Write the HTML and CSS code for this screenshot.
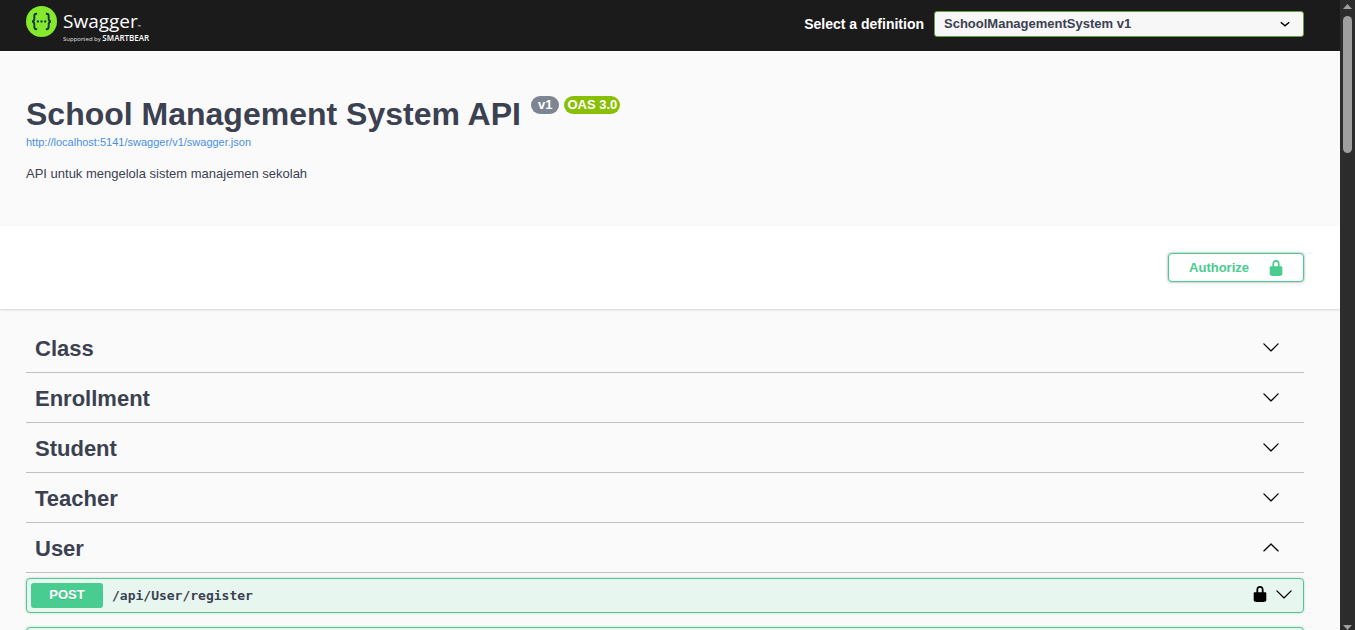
FILE: index.html
```html
<!DOCTYPE html>
<html lang="en">
<head>
<meta charset="utf-8">
<meta name="viewport" content="width=device-width, initial-scale=1">
<title>Swagger UI</title>
<link rel="stylesheet" href="styles.css">
</head>
<body>
<svg class="defs" aria-hidden="true">
  <symbol id="lock" viewBox="0 0 20 20"><path d="M15.8 8H14V5.6C14 2.703 12.665 1 10 1 7.334 1 6 2.703 6 5.6V8H4c-.553 0-1 .646-1 1.199V17c0 .549.428 1.139.951 1.307l1.197.387C5.672 18.861 6.55 19 7.1 19h5.8c.549 0 1.428-.139 1.951-.307l1.196-.387c.524-.167.953-.757.953-1.306V9.199C17 8.646 16.352 8 15.8 8zM12 8H8V5.199C8 3.754 8.797 3 10 3c1.203 0 2 .754 2 2.199V8z"/></symbol>
  <symbol id="down" viewBox="0 0 20 20"><path d="M17.418 6.109c.272-.268.709-.268.979 0s.271.701 0 .969l-7.908 7.83c-.27.268-.707.268-.979 0l-7.908-7.83c-.27-.268-.27-.701 0-.969s.709-.268.979 0L10 13.25z"/></symbol>
  <symbol id="up" viewBox="0 0 20 20"><path d="M17.418 14.908c.272.268.709.268.979 0s.271-.701 0-.969l-7.908-7.83c-.27-.268-.707-.268-.979 0l-7.908 7.83c-.27.268-.27.701 0 .969s.709.268.979 0L10 7.767z"/></symbol>
</svg>
<div class="page">
  <header class="topbar">
    <a class="logo" href="#" aria-label="Swagger, supported by SmartBear">
      <svg class="logo-mark" viewBox="0 0 32 32" aria-hidden="true">
        <circle cx="16" cy="16" r="16" fill="#85ea2d"/>
        <g fill="none" stroke="#173647" stroke-width="2">
          <path d="M11.500 8h-.8c-1.500 0-2.100.8-2.100 2.200v2.600c0 2-.6 3-2.300 3.200 1.700.2 2.300 1.200 2.300 3.200v2.600c0 1.400.6 2.200 2.100 2.200h.8"/>
          <path d="M20.500 8h.8c1.500 0 2.100.8 2.100 2.200v2.600c0 2 .6 3 2.300 3.200-1.700.2-2.300 1.200-2.300 3.200v2.600c0 1.400-.6 2.200-2.100 2.200h-.8"/>
        </g>
        <g fill="#173647"><circle cx="12.200" cy="16" r="1.200"/><circle cx="16" cy="16" r="1.200"/><circle cx="19.800" cy="16" r="1.200"/></g>
      </svg>
      <span class="logo-text">
        <span class="logo-name">Swagger<span class="logo-tm">™</span></span>
        <span class="logo-sub">Supported by <b>SMARTBEAR</b></span>
      </span>
    </a>
    <div class="definition">
      <label for="definition">Select a definition</label>
      <span class="select-box">
        <select id="definition"><option>SchoolManagementSystem v1</option></select>
        <svg class="select-arrow" viewBox="0 0 20 20" aria-hidden="true"><path d="M3 7l7 6 7-6"/></svg>
      </span>
    </div>
  </header>
  <main>
    <section class="info">
      <div class="title-row">
        <h1>School Management System API</h1>
        <span class="badge">v1</span>
        <span class="badge oas">OAS 3.0</span>
      </div>
      <a class="spec-link" href="#">http://localhost:5141/swagger/v1/swagger.json</a>
      <p>API untuk mengelola sistem manajemen sekolah</p>
    </section>
    <section class="auth">
      <button class="authorize" type="button">Authorize<svg class="icon"><use href="#lock"/></svg></button>
    </section>
    <section class="tags">
      <h2><button class="tag" type="button">Class<svg class="icon"><use href="#down"/></svg></button></h2>
      <h2><button class="tag" type="button">Enrollment<svg class="icon"><use href="#down"/></svg></button></h2>
      <h2><button class="tag" type="button">Student<svg class="icon"><use href="#down"/></svg></button></h2>
      <h2><button class="tag" type="button">Teacher<svg class="icon"><use href="#down"/></svg></button></h2>
      <h2><button class="tag" type="button">User<svg class="icon"><use href="#up"/></svg></button></h2>
      <div class="operation">
        <span class="method">POST</span>
        <span class="path">/api/User/register</span>
        <button class="icon-button" type="button" aria-label="Authorization"><svg class="icon"><use href="#lock"/></svg></button>
        <button class="icon-button" type="button" aria-label="Expand"><svg class="icon"><use href="#down"/></svg></button>
      </div>
      <div class="operation"></div>
    </section>
  </main>
</div>
<div class="scrollbar" aria-hidden="true">
  <svg class="scroll-arrow" viewBox="0 0 9 5"><path d="M4.500 0L9 5H0z"/></svg>
  <div class="track"><div class="thumb"></div></div>
  <svg class="scroll-arrow" viewBox="0 0 9 5"><path d="M0 0h9L4.500 5z"/></svg>
</div>
</body>
</html>
```
FILE: styles.css
```css
* { box-sizing: border-box; }
body {
  display: flex;
  height: 100vh;
  margin: 0;
  overflow: hidden;
  background: #fafafa;
  color: #3b4151;
  font-family: "Liberation Sans", Arial, sans-serif;
}
button, select { font: inherit; color: inherit; }
button { cursor: pointer; }
h1, h2, p { margin: 0; }
.defs { position: absolute; width: 0; height: 0; }
.icon { width: 18px; height: 18px; fill: currentColor; }
.page { flex: 1; min-width: 0; overflow: hidden; }

.topbar {
  display: flex;
  align-items: center;
  justify-content: space-between;
  min-height: 51px;
  padding: 0 36px 3px 26px;
  background: #1b1b1b;
}
.logo {
  display: flex;
  align-self: flex-start;
  gap: 6px;
  padding-top: 6px;
  color: #fff;
  font-family: "Open Sans", sans-serif;
  text-decoration: none;
}
.logo-mark { width: 31px; height: 31px; }
.logo-text { display: flex; flex-direction: column; padding-top: 2px; }
.logo-name { font-size: 19px; line-height: 26px; }
.logo-tm { font-size: 4px; line-height: 1; }
.logo-sub { color: #e4e4e4; font-size: 6px; line-height: 8px; white-space: nowrap; }
.logo-sub b { color: #fff; font-size: 8px; font-weight: 600; line-height: 1; }
.definition {
  display: flex;
  align-items: center;
  gap: 10px;
  color: #fff;
  font-size: 14px;
  font-weight: bold;
}
.select-box { position: relative; width: 370px; }
.select-box select {
  display: block;
  width: 100%;
  height: 26px;
  padding: 0 36px 2px 9px;
  appearance: none;
  border: 1px solid #62a03f;
  border-radius: 3px;
  background: #f7f7f7;
  color: #3b4151;
  font-size: 13px;
}
.select-arrow {
  position: absolute;
  top: 7px;
  right: 13px;
  width: 12px;
  height: 12px;
  fill: none;
  stroke: #000;
  stroke-width: 2.500;
  pointer-events: none;
}

.info { padding: 44px 26px 43px; }
.title-row { display: flex; align-items: flex-start; gap: 5px; }
h1 { padding-right: 5px; font-size: 32px; line-height: 38px; }
.badge {
  padding: 0 7px;
  margin-top: 1px;
  border-radius: 9px;
  background: #7d8492;
  color: #fff;
  font-size: 13px;
  font-weight: bold;
  line-height: 18px;
}
.oas { padding: 0 3px; background: #89bf04; }
.spec-link {
  display: block;
  color: #4990e2;
  font-size: 11px;
  line-height: 18px;
  text-decoration: none;
}
.info p { margin-top: 14px; font-size: 13px; line-height: 18px; }

.auth {
  display: flex;
  justify-content: flex-end;
  padding: 27px 36px;
  background: #fff;
  box-shadow: 0 1px 2px rgba(0, 0, 0, .15);
}
.authorize {
  display: flex;
  align-items: center;
  gap: 18px;
  height: 29px;
  padding: 0 18px 0 20px;
  border: 1px solid #49cc90;
  border-radius: 4px;
  background: #fff;
  box-shadow: 0 0 3px rgba(0, 0, 0, .4);
  color: #49cc90;
  font-size: 13px;
  font-weight: bold;
}

.tags { padding: 14px 36px 0 26px; }
.tag {
  display: flex;
  align-items: center;
  justify-content: space-between;
  width: 100%;
  height: 50px;
  padding: 2px 24px 0 9px;
  border: 0;
  border-bottom: 1px solid #bfc0c3;
  background: none;
  font-size: 22px;
  font-weight: bold;
}
.tag .icon { margin-bottom: 4px; fill: #000; }
.operation {
  display: flex;
  align-items: center;
  height: 35px;
  margin: 5px 0 14px;
  padding: 0 10px 0 4px;
  border: 1px solid #49cc90;
  border-radius: 4px;
  background: #e8f6f0;
  box-shadow: 0 0 3px rgba(0, 0, 0, .19);
}
.method {
  width: 72px;
  padding-bottom: 2px;
  border-radius: 3px;
  background: #49cc90;
  color: #fff;
  font-size: 13px;
  font-weight: bold;
  line-height: 23px;
  text-align: center;
  text-shadow: 0 1px 0 rgba(0, 0, 0, .1);
}
.path {
  flex: 1;
  padding-left: 9px;
  font-family: Consolas, "DejaVu Sans Mono", monospace;
  font-size: 13px;
  font-weight: 600;
}
.icon-button { display: flex; margin-left: 6px; padding: 0 0 3px; border: 0; background: none; color: #000; }

.scrollbar {
  display: flex;
  flex-direction: column;
  align-items: center;
  gap: 7px;
  width: 15px;
  padding-top: 4px;
  background: #2c2c2c;
}
.scroll-arrow { width: 9px; height: 5px; fill: #9f9f9f; }
.track { flex: 1; }
.thumb { width: 9px; height: 137px; border-radius: 5px; background: #9f9f9f; }
```
